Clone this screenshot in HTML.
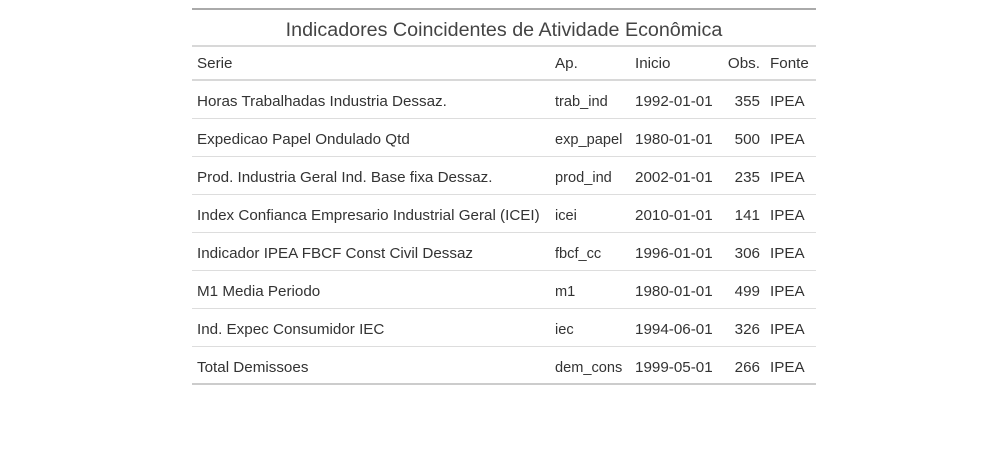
<!DOCTYPE html>
<html><head><meta charset="utf-8"><style>
body{margin:0;width:1005px;height:466px;background:#fff;font-family:"Liberation Sans",sans-serif;color:#333;position:relative;overflow:hidden}
.l{position:absolute;left:192px;width:624px;background:#ddd;height:1px}
.t{position:absolute;font-size:15.2px;line-height:18px;white-space:nowrap}
.r{text-align:right}
</style></head><body>
<div class="l" style="top:8px;height:2px;background:#aaa"></div>
<div class="t" style="left:192px;width:624px;text-align:center;top:19px;font-size:19.7px;line-height:22px;color:#444">Indicadores Coincidentes de Atividade Econômica</div>
<div class="l" style="top:45px;height:2px;background:#d8d8d8"></div>
<div class="t" style="left:197px;top:55px">Serie</div>
<div class="t" style="left:555px;top:55px">Ap.</div>
<div class="t" style="left:635px;top:55px">Inicio</div>
<div class="t r" style="left:700px;width:60px;top:55px">Obs.</div>
<div class="t" style="left:770px;top:55px">Fonte</div>
<div class="l" style="top:79px;height:2px;background:#d8d8d8"></div>
<div id="rows"></div>
<script>
var d=[["Horas Trabalhadas Industria Dessaz.","trab_ind","1992-01-01","355"],
["Expedicao Papel Ondulado Qtd","exp_papel","1980-01-01","500"],
["Prod. Industria Geral Ind. Base fixa Dessaz.","prod_ind","2002-01-01","235"],
["Index Confianca Empresario Industrial Geral (ICEI)","icei","2010-01-01","141"],
["Indicador IPEA FBCF Const Civil Dessaz","fbcf_cc","1996-01-01","306"],
["M1 Media Periodo","m1","1980-01-01","499"],
["Ind. Expec Consumidor IEC","iec","1994-06-01","326"],
["Total Demissoes","dem_cons","1999-05-01","266"]];
var h="";
d.forEach(function(r,i){var y=93+i*38;
h+='<div class="t" style="left:197px;top:'+y+'px;width:352px;overflow:hidden">'+r[0]+'</div>';
h+='<div class="t" style="left:555px;top:'+y+'px;font-size:14.6px">'+r[1]+'</div>';
h+='<div class="t" style="left:635px;top:'+y+'px">'+r[2]+'</div>';
h+='<div class="t r" style="left:700px;width:60px;top:'+y+'px">'+r[3]+'</div>';
h+='<div class="t" style="left:770px;top:'+y+'px">IPEA</div>';
var ly=118+i*38;
h+='<div class="l" style="top:'+ly+'px;'+(i==7?'height:2px;background:#ccc;top:383px':'')+'"></div>';});
document.getElementById("rows").innerHTML=h;
</script>
</body></html>
